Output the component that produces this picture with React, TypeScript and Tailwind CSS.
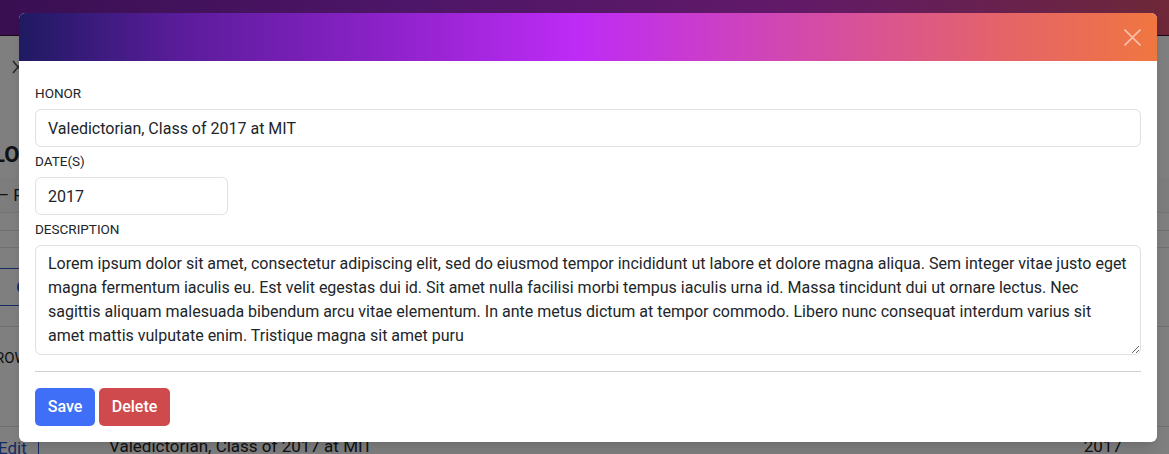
import React from "react";

const desc =
  "Lorem ipsum dolor sit amet, consectetur adipiscing elit, sed do eiusmod tempor incididunt ut labore et dolore magna aliqua. Sem integer vitae justo eget magna fermentum iaculis eu. Est velit egestas dui id. Sit amet nulla facilisi morbi tempus iaculis urna id. Massa tincidunt dui ut ornare lectus. Nec sagittis aliquam malesuada bibendum arcu vitae elementum. In ante metus dictum at tempor commodo. Libero nunc consequat interdum varius sit amet mattis vulputate enim. Tristique magna sit amet puru";

function Background() {
  return (
    <div className="h-[454px] w-full overflow-hidden bg-white text-[#212529]">
      <div className="h-[36px] border-b border-[#3a1030] bg-[linear-gradient(to_right,#741ea4_0%,#9c2cd0_35%,#c434d0_68%,#dc5070_100%)]" />
      <div className="pl-[12px] pt-[24px]">
        <svg width="12" height="14" viewBox="0 0 12 14" fill="none" stroke="#555" strokeWidth="1.6">
          <path d="M1 1 L11 13 M11 1 L1 13" />
        </svg>
      </div>
      <div className="mt-[67px] -ml-[7px] text-[22px] font-bold leading-[28px]">LOGROS</div>
      <div className="mt-[9px] flex h-[35px] items-center border-b border-[#e5e5e5] bg-[#fafafa] text-[17px] leading-[20px]">
        <span className="-ml-[2px]">– Premios</span>
      </div>
      <div className="mt-[17px] border-b border-[#e0e0e0]" />
      <div className="mt-[16px] border-b border-[#e0e0e0]" />
      <div className="mt-[20px] flex h-[38px] w-[24px] items-center justify-end rounded-r-md border border-l-0 border-[#2f55c8]">
        <div className="mr-[-8px] h-[14px] w-[14px] rounded-full border-2 border-[#2f55c8]" />
      </div>
      <div className="mt-[20px] border-b border-[#e0e0e0]" />
      <div className="mt-[21px] -ml-[5px] text-[15px] leading-[20px]">ROW</div>
      <div className="mt-[58px] border-b border-[#e0e0e0]" />
      <div className="flex h-[40px] text-[17px] leading-[22px]">
        <div className="w-[39px] border-r border-[#2f55c8] pt-[10px] text-[#2f55c8]">
          <span className="-ml-[2px]">Edit</span>
        </div>
        <div className="flex flex-1 pt-[8px]">
          <span className="ml-[70px]">Valedictorian, Class of 2017 at MIT</span>
          <span className="ml-auto mr-[47px]">2017</span>
        </div>
      </div>
    </div>
  );
}

export default function App() {
  return (
    <div className="relative h-[454px] w-[1169px] overflow-hidden font-['Roboto',sans-serif]">
      <Background />
      <div className="absolute inset-0 bg-black/50" />
      <div className="absolute left-[19px] top-[13px] w-[1138px] rounded-md bg-white shadow-lg">
        <div className="flex h-[48px] items-center justify-end rounded-t-md bg-[linear-gradient(to_right,#1f1a62_0%,#5a1c9a_14%,#8c22c8_32%,#be2bf6_49%,#d249ae_68%,#e4636a_86%,#f07640_100%)] pr-[16px]">
          <svg width="17" height="17" viewBox="0 0 17 17" fill="none" stroke="rgba(255,255,255,0.55)" strokeWidth="1.6">
            <path d="M0.5 0.5 L16.5 16.5 M16.5 0.5 L0.5 16.5" />
          </svg>
        </div>
        <div className="px-4 pb-4 pt-[23px] text-[#212529]">
          <label className="mb-[7px] block text-[13.5px] leading-[18px] text-[#212529]">HONOR</label>
          <input
            className="mb-[5px] block h-[38px] w-full rounded-md border border-[#dee2e6] px-3 text-[16px] text-[#212529] outline-none"
            defaultValue="Valedictorian, Class of 2017 at MIT"
          />
          <label className="mb-[7px] block text-[13.5px] leading-[18px]">DATE(S)</label>
          <input
            className="mb-[5px] block h-[38px] w-[193px] rounded-md border border-[#dee2e6] px-3 text-[16px] text-[#212529] outline-none"
            defaultValue="2017"
          />
          <label className="mb-[7px] block text-[13.5px] leading-[18px]">DESCRIPTION</label>
          <textarea
            className="block h-[110px] w-full resize-y rounded-md border border-[#dee2e6] px-3 py-[6px] text-[16px] leading-[24px] text-[#212529] outline-none"
            defaultValue={desc}
          />
          <div className="mt-[16px] border-t border-[#cfcfcf]" />
          <div className="mt-[16px] flex gap-[4px]">
            <button className="h-[38px] w-[60px] rounded-[5px] bg-[#3f6ff6] text-[16px] font-medium text-white">
              Save
            </button>
            <button className="h-[38px] w-[71px] rounded-[5px] bg-[#cf4a4d] text-[16px] font-medium text-white">
              Delete
            </button>
          </div>
        </div>
      </div>
    </div>
  );
}
